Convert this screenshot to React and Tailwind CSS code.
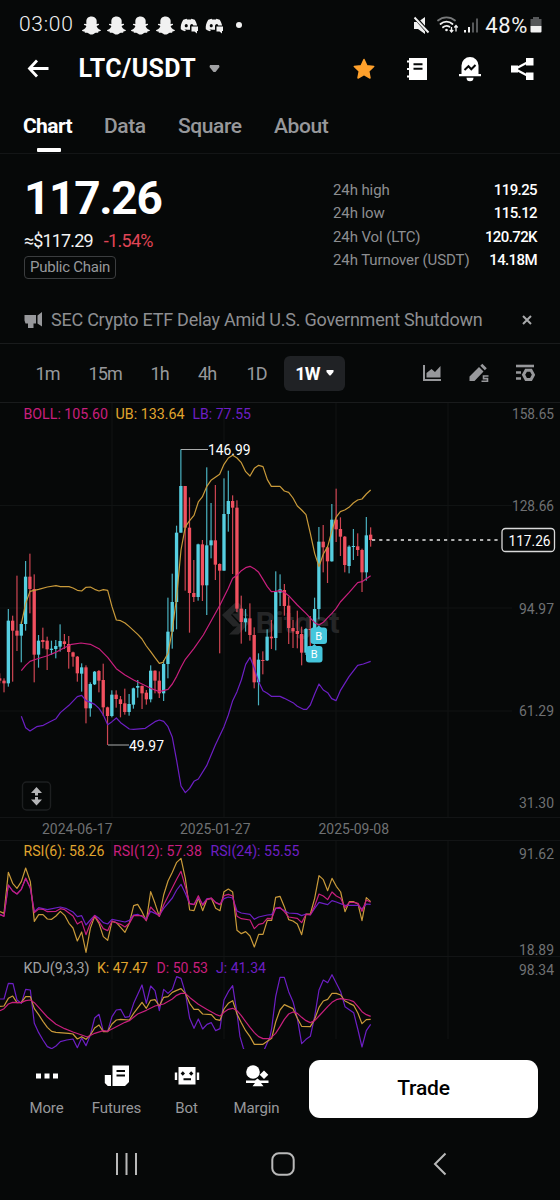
import React from 'react';
import { FaSnapchatGhost, FaDiscord } from 'react-icons/fa';

const AQUA = '#56cfe1';
const RED = '#f0505f';
const GOLD = '#c99a3a';
const PINK = '#c81f7d';
const VIOLET = '#6d1fc4';

const STEP = 12.94;

// [up, wick top, body top, body bottom, wick bottom], chart units are thirds of a pixel
const candles = [
  [0, 730, 745, 752, 760], [0, 745, 752, 760, 787], [1, 537, 572, 760, 770], [0, 557, 572, 602, 755],
  [0, 437, 602, 617, 663], [1, 575, 582, 617, 697], [1, 393, 440, 582, 602], [0, 371, 440, 477, 550],
  [0, 433, 477, 674, 757], [1, 615, 632, 674, 713], [0, 593, 630, 636, 655], [0, 620, 632, 658, 720],
  [1, 632, 656, 660, 675], [1, 630, 648, 657, 685], [1, 583, 633, 650, 665], [0, 612, 634, 642, 657],
  [0, 618, 642, 666, 716], [0, 665, 667, 680, 710], [0, 678, 680, 730, 755], [1, 700, 712, 731, 785],
  [0, 706, 712, 835, 880], [1, 757, 762, 835, 860], [1, 723, 725, 763, 765], [0, 720, 723, 752, 787],
  [0, 701, 750, 832, 858], [0, 830, 832, 858, 945], [1, 781, 794, 858, 862], [0, 781, 794, 807, 833],
  [0, 798, 808, 822, 862], [0, 776, 820, 846, 854], [1, 792, 822, 846, 857], [1, 773, 775, 824, 836],
  [1, 750, 768, 773, 803], [0, 766, 768, 790, 837], [0, 780, 788, 808, 824], [1, 706, 722, 808, 817],
  [0, 721, 722, 752, 790], [0, 724, 752, 790, 804], [1, 690, 702, 790, 813], [1, 503, 605, 702, 745],
  [1, 431, 516, 605, 656], [1, 287, 308, 516, 598], [1, 58, 168, 308, 308], [0, 168, 168, 293, 482],
  [0, 202, 293, 489, 608], [0, 390, 489, 501, 516], [1, 341, 343, 501, 512], [0, 330, 343, 466, 513],
  [1, 112, 346, 466, 555], [1, 219, 331, 346, 385], [0, 165, 331, 404, 450], [0, 400, 402, 422, 670],
  [1, 145, 252, 422, 422], [1, 122, 213, 252, 305], [0, 196, 213, 233, 432], [0, 211, 233, 536, 546],
  [0, 497, 536, 576, 641], [1, 537, 565, 577, 605], [0, 520, 565, 615, 632], [0, 592, 615, 757, 775],
  [1, 670, 689, 757, 826], [0, 664, 690, 692, 733], [1, 598, 620, 691, 693], [0, 570, 620, 625, 657],
  [1, 424, 486, 624, 661], [1, 433, 478, 488, 528], [0, 462, 480, 528, 557], [0, 500, 527, 594, 642],
  [0, 570, 594, 604, 654], [0, 542, 603, 612, 655], [0, 590, 612, 668, 706], [1, 594, 597, 668, 675],
  [0, 558, 597, 600, 648], [1, 503, 537, 600, 640], [1, 291, 335, 537, 568], [0, 285, 335, 352, 427],
  [0, 350, 352, 394, 459], [1, 222, 269, 394, 395], [0, 176, 269, 298, 336], [0, 262, 297, 320, 378],
  [0, 318, 320, 405, 427], [1, 346, 350, 408, 430], [1, 297, 348, 351, 390], [0, 310, 349, 360, 378],
  [0, 356, 360, 427, 486], [1, 261, 316, 427, 452], [0, 292, 314, 330, 350],
];

// each series is a list of [x offset, points]
const boll = {
  ub: [
    [0, '64,582 77,520 90,484 116,478 142,471 168,467 181,470 207,470 219,474 232,481 245,483 258,472 271,471 284,478 297,483 310,479 323,481 336,530 349,570 362,572 375,579 388,590 401,602 414,614 426,627 439,648 452,665 465,683 478,700 489,697 504,670 517,600 530,500 543,360 556,290 569,272'],
    [450, '132,256 145,216 157,201 170,170 183,151 196,142 209,133 222,103 235,84 248,76 261,84 274,98 287,125 300,138 313,115 326,106 339,110 352,149'],
    [750, '64,169 90,169 103,183 116,187 129,204 142,228 155,240 168,254 181,310 194,370 207,410 220,372 233,350 245,305 258,262 271,245 284,240 297,232 310,219 323,210 336,207 349,192 362,180'],
  ],
  mid: [
    [0, '64,722 77,706 90,694 110,687 140,678 165,668 190,655 215,643 243,639 271,643 297,656 323,682 349,716 375,735 401,750 426,762 452,775 478,785 504,778 517,762 530,739 543,712'],
    [450, '106,688 132,655 160,615 185,570 210,525 235,475 248,445 261,436 274,422 287,413 300,409 313,416 326,427 339,448 352,470'],
    [750, '64,485 77,484 90,482 103,487 116,497 142,525 168,550 194,578 207,585 220,577 233,563 245,551 258,536 271,516 297,488 323,458 336,455 349,446 362,437'],
  ],
  lb: [
    [0, '64,859 77,893 90,903 110,890 130,886 150,875 168,866 181,848 207,826 232,800 245,796 258,812 271,817 284,823 297,835 310,855 323,884 336,875 349,864 362,878 388,897 401,898 436,895 465,875 478,870 491,874 504,890 517,922 530,992 543,1068 556,1088'],
    [450, '119,1075 132,1054 145,1047 170,1007 196,945 222,890 235,855 248,812 261,785 274,750 287,703 300,682 313,715 326,755 339,782 352,790'],
    [750, '64,799 90,799 103,805 129,818 142,829 160,838 170,838 181,825 194,792 207,762 220,780 233,788 245,806 258,812 271,782 297,740 323,706 340,702 362,694'],
  ],
};

const rsi = {
  r6: [
    [0, '0,305 12,310 25,187 38,220 51,235 64,215 77,174 91,215 103,334 116,314 129,314 142,327 155,328 168,318 181,304 194,316 207,340 219,354 232,393 245,366 258,427 271,355 284,319 297,340 310,380 323,391 336,334 349,338 362,352 375,367 388,340 401,287 413,283 426,305 439,332 452,245 465,280 478,319 491,255 504,213 517,187 530,157 543,145 556,205 569,300'],
    [570, '12,302 25,264 38,302 51,268 64,265 77,295 90,302 102,245 115,237 128,246 141,361 154,371 167,365 180,378 193,411 206,373 219,373 232,331 245,331 257,262 270,259 283,290 296,329 309,333 322,342 335,374 348,312 361,312 374,265 387,197 400,209 413,242 426,205 439,229 452,246 465,305 478,275 491,275 504,282 516,332 529,263 542,275'],
  ],
  r12: [
    [0, '0,314 12,319 25,225 38,243 51,252 64,238 77,204 91,233 103,308 116,297 129,298 142,305 168,304 181,296 194,299 219,318 232,342 245,334 258,374 271,340 284,317 297,335 310,356 323,362 336,333 362,343 375,351 388,340 401,317 426,317 439,332 452,291 478,319 491,285 504,259 530,208 543,184 556,230 569,281'],
    [570, '12,284 25,257 38,286 51,268 64,264 77,278 90,284 102,257 115,253 128,258 141,319 154,326 180,330 193,356 206,343 219,340 232,325 245,326 257,294 270,292 283,305 296,321 322,325 335,338 348,313 361,314 374,288 387,252 400,258 413,269 426,246 439,258 452,265 465,293 478,277 491,277 504,280 516,304 529,270 542,277'],
  ],
  r24: [
    [0, '0,314 12,318 25,225 38,243 51,252 64,238 77,206 91,235 103,305 116,293 142,299 181,291 200,296 219,306 232,320 245,317 258,345 271,330 284,316 297,325 310,338 323,342 336,328 375,336 388,331 401,315 413,313 439,326 452,304 478,316 491,295 517,264 530,240 543,223 556,250 569,281'],
    [570, '12,283 25,263 38,283 51,266 64,265 77,277 90,283 102,266 115,261 128,264 141,303 154,309 180,313 193,328 206,321 232,315 245,314 257,295 270,295 296,309 322,311 335,317 348,312 361,315 374,295 387,277 413,284 426,272 439,276 465,286 504,286 516,297 529,282 542,283'],
  ],
};

const kdj = {
  k: [
    [0, '0,589 12,588 25,565 38,558 51,578 64,577 77,560 91,560 103,596 116,614 129,634 142,652 155,664 168,667 206,670 219,672 232,687 245,680 258,688 271,675 284,654 297,645 310,665 323,665 336,642 349,630 362,628 388,630 401,610 426,577 439,595 452,571 465,569 478,588 491,562 504,560 517,547 530,541 543,536 556,550 569,580'],
    [570, '12,598 25,598 38,612 64,614 77,628 90,631 102,597 115,580 128,572 141,612 154,638 167,662 180,680 193,703 219,703 245,685 257,636 270,600 283,584 296,590 309,596 322,625 335,649 361,650 374,628 387,592 400,573 413,568 426,550 439,550 452,555 465,573 478,580 491,586 504,610 516,641 529,629 542,628'],
  ],
  d: [
    [0, '0,602 12,596 25,582 38,577 64,578 77,572 91,570 103,578 116,592 142,621 168,643 194,656 219,666 245,675 262,681 284,670 310,662 323,664 349,650 375,637 388,632 413,612 439,601 465,588 491,582 517,567 530,556 543,550 556,550'],
    [570, '0,563 25,583 50,598 77,613 90,618 102,607 115,598 128,595 141,602 154,617 167,635 180,652 193,668 206,680 219,686 240,686 257,670 270,650 283,628 296,612 309,606 322,610 335,622 348,632 361,638 374,632 387,618 413,590 426,577 439,569 452,566 478,570 491,575 504,590 516,605 529,614 542,619'],
  ],
  j: [
    [0, '0,567 12,567 25,520 39,521 51,570 64,580 77,538 91,540 103,640 116,668 129,690 142,710 155,716 168,708 181,695 200,690 219,687 232,713 245,684 258,707 271,675 284,624 297,613 310,664 323,664 336,620 349,600 362,598 375,622 388,620 401,580 426,525 439,580 452,528 465,542 478,602 491,538 504,550 517,538 530,500 543,505 556,548 569,625'],
    [570, '12,655 25,627 38,657 51,643 64,638 77,662 90,656 102,570 115,545 128,527 141,610 150,680 160,714 180,760 205,760 225,714 240,680 245,655 257,560 270,502 283,502 296,545 309,575 322,625 335,701 348,688 361,679 374,620 387,540 400,510 413,518 426,494 439,520 452,545 465,590 491,608 504,660 516,711 529,662 542,643'],
  ],
};

const toPoints = (parts) =>
  parts
    .map(([dx, pts]) => pts.split(' ').map((p) => {
      const [x, y] = p.split(',').map(Number);
      return `${x + dx},${y}`;
    }).join(' '))
    .join(' ');

const Line = ({ parts, color }) => (
  <polyline points={toPoints(parts)} fill="none" stroke={color} strokeWidth="3.6" strokeLinejoin="round" />
);

const Label = ({ x, y, w, size = 14.5, fill = '#6f7173', children }) => (
  <text x={x} y={y} fontSize={size} fill={fill} textLength={w} lengthAdjust="spacingAndGlyphs">
    {children}
  </text>
);

const Columns = ({ height }) => (
  <path d={`M112 0V${height}M224 0V${height}M336 0V${height}M448 0V${height}`} stroke="#101313" />
);

const BuyMark = ({ x, y }) => (
  <g>
    <path d={`M${x + 5} ${y + 1}l3.3 -3l3.3 3z`} fill="#45c6dc" />
    <rect x={x} y={y} width="16.5" height="16.5" rx="3" fill="#45c6dc" />
    <text x={x + 8.2} y={y + 12.2} fontSize="11" fill="#fff" textAnchor="middle">B</text>
  </g>
);

const PriceChart = () => (
  <svg className="block border-t border-[#191b1c]" width="560" height="415" viewBox="0 0 560 414">
    <Columns height={414} />
    <path d="M0 102.5H512M0 205H512M0 308H512" stroke="#101313" />

    <g fill="#252627">
      <path d="M235 200l-13 12 11 11.500h8.500L231 212l4-4 5 5h8.500L239 200z" />
      <path d="M229 231.500h9.500L249 220l-9-9.500h-8.500l9 9.500z" />
      <text x="255.500" y="230" fontSize="29" fontWeight="700" textLength="84" lengthAdjust="spacingAndGlyphs">Bitget</text>
    </g>

    <g transform="translate(0 27) scale(0.33333)">
      {candles.map(([up, high, top, bottom, low], i) => {
        const x = 25 + (i - 2) * STEP;
        const color = up ? AQUA : RED;
        return (
          <g key={i} fill={color}>
            <rect x={x - 1.8} y={high} width="3.6" height={low - high} opacity="0.85" />
            <rect x={x - 5} y={top} width="10" height={Math.max(bottom - top, 3)} />
          </g>
        );
      })}
      <Line parts={boll.ub} color={GOLD} />
      <Line parts={boll.mid} color={PINK} />
      <Line parts={boll.lb} color={VIOLET} />
    </g>

    <path d="M181 46.500H208M108 342H129" stroke="#a9abab" />
    <Label x={208} y={52} w={42.5} size={15.5} fill="#fff">146.99</Label>
    <Label x={129} y={347.5} w={35} size={15.5} fill="#fff">49.97</Label>

    <BuyMark x={310.5} y={224.5} />
    <BuyMark x={306} y={243} />

    <path d="M372 137H500" stroke="#e8e8e8" strokeWidth="1.6" strokeDasharray="3.2 4" />
    <rect x="502" y="125.500" width="52.500" height="23" rx="3.500" fill="#060808" stroke="#d9d9d9" strokeWidth="1.3" />
    <Label x={508.5} y={142.5} w={42} size={15.5} fill="#fff">117.26</Label>

    <Label x={23.5} y={16} w={84.5} fill={PINK}>BOLL: 105.60</Label>
    <Label x={115.5} y={16} w={69} fill="#e0a52e">UB: 133.64</Label>
    <Label x={192.5} y={16} w={58.5} fill={VIOLET}>LB: 77.55</Label>

    <Label x={512} y={16} w={42}>158.65</Label>
    <Label x={512} y={107.5} w={42}>128.66</Label>
    <Label x={519} y={210.5} w={35}>94.97</Label>
    <Label x={519} y={313} w={35}>61.29</Label>
    <Label x={519} y={404.5} w={35}>31.30</Label>

    <rect x="22.500" y="379" width="28" height="28" rx="4" fill="#060808" stroke="#1d1f20" strokeWidth="1.4" />
    <path d="M36.500 384l5.500 6h-4v2.500h-3V390h-4zM36.500 402.500l5.500-6h-4V394h-3v2.500h-4z" fill="#b4b5b7" />
  </svg>
);

const DateAxis = () => (
  <svg className="block border-y border-[#121415]" width="560" height="24" viewBox="0 0 560 22">
    <Label x={42} y={15.5} w={70.5}>2024-06-17</Label>
    <Label x={180} y={15.5} w={70.5}>2025-01-27</Label>
    <Label x={318.5} y={15.5} w={70.5}>2025-09-08</Label>
  </svg>
);

const RsiChart = () => (
  <svg className="block overflow-visible" width="560" height="115" viewBox="0 0 560 115">
    <Columns height={115} />
    <g transform="translate(0 -31) scale(0.33333)">
      <Line parts={rsi.r6} color={GOLD} />
      <Line parts={rsi.r24} color={VIOLET} />
      <Line parts={rsi.r12} color={PINK} />
    </g>
    <Label x={23.5} y={15} w={81} fill="#e0a52e">RSI(6): 58.26</Label>
    <Label x={113} y={15} w={89} fill={PINK}>RSI(12): 57.38</Label>
    <Label x={210.5} y={15} w={89} fill={VIOLET}>RSI(24): 55.55</Label>
    <Label x={519} y={17.5} w={35}>91.62</Label>
    <Label x={519} y={114} w={35}>18.89</Label>
  </svg>
);

const KdjChart = () => (
  <svg className="block border-t border-[#121415]" width="560" height="93" viewBox="0 0 560 92">
    <Columns height={82} />
    <g transform="translate(0 -147) scale(0.33333)">
      <Line parts={kdj.j} color={VIOLET} />
      <Line parts={kdj.k} color={GOLD} />
      <Line parts={kdj.d} color={PINK} />
    </g>
    <Label x={23.5} y={16} w={66} fill="#a0a1a3">KDJ(9,3,3)</Label>
    <Label x={97} y={16} w={51} fill="#e0a52e">K: 47.47</Label>
    <Label x={156.5} y={16} w={51.5} fill={PINK}>D: 50.53</Label>
    <Label x={216} y={16} w={50} fill={VIOLET}>J: 41.34</Label>
    <Label x={519} y={18} w={35}>98.34</Label>
  </svg>
);

const StatusBar = () => (
  <div className="flex h-[50px] items-center pl-[19px] pr-[18px] text-[#f1f1f1]">
    <span className="w-[63px] text-[21px] font-light tracking-[0.7px]">03:00</span>
    <div className="flex items-center gap-[5.500px]">
      {[0, 1, 2, 3].map((i) => <FaSnapchatGhost key={i} className="size-[19px]" />)}
      {[0, 1].map((i) => (
        <svg key={i} width="19" height="19" viewBox="0 0 19 19">
          <FaDiscord x="0" y="0" size="18" />
          <path d="M10 9.500h9v8.500h-9z" fill="#060808" />
          <path d="M11.500 10.500h6.500v4.500h-1v2.500l-2.500-2h-3z" fill="currentColor" />
        </svg>
      ))}
    </div>
    <span className="ml-[12px] size-[6px] rounded-full bg-[#f1f1f1]" />
    <div className="ml-auto flex items-center">
      <svg width="74" height="22" viewBox="0 0 74 22">
        <path d="M2 8h4l7-5v17l-7-5H2z" fill="currentColor" />
        <path d="M2 2l14 16" stroke="#060808" strokeWidth="3.600" />
        <path d="M2.500 3.500l14 15" stroke="currentColor" strokeWidth="1.900" />
        <g fill="none" stroke="currentColor" strokeWidth="1.800" strokeLinecap="round">
          <path d="M26 6.500a13 13 0 0 1 17 0" stroke="#77797a" />
          <path d="M28.500 10a9 9 0 0 1 12 0" />
          <path d="M31 13.300a5.500 5.500 0 0 1 6.500-.500" />
        </g>
        <circle cx="34.500" cy="16" r="1.300" fill="currentColor" />
        <path d="M39.500 13v5M37.800 16l1.700 2 1.700-2M44 17.500v-6M42.300 13.500l1.700-2 1.700 2" fill="none" stroke="currentColor" strokeWidth="1.300" />
        <path d="M53 16v2.500" stroke="currentColor" strokeWidth="2" />
        <path d="M57 13v5.500" stroke="currentColor" strokeWidth="2" />
        <path d="M61 8.500v10M65 4.500v14" stroke="#56585a" strokeWidth="2" />
      </svg>
      <span className="-ml-[1px] text-[22px] tracking-[0.6px]">48%</span>
      <svg className="ml-[2px]" width="12" height="18" viewBox="0 0 12 18">
        <path d="M3 1h6v2H11.500v7H.500V3H3z" fill="#56585a" />
        <path d="M.500 10h11v5.500a1 1 0 0 1-1 1h-9a1 1 0 0 1-1-1z" fill="currentColor" />
      </svg>
    </div>
  </div>
);

const Header = () => (
  <header className="flex h-[38px] items-center pl-[26px] pr-[26px] text-white">
    <svg width="24" height="20" viewBox="0 0 24 20" fill="none" stroke="currentColor" strokeWidth="2.800">
      <path d="M11 1.500L3.500 9.500l7.500 8M3.500 9.500h19" />
    </svg>
    <h1 className="ml-[28.500px] text-[25px] font-bold tracking-[0.4px]">LTC/USDT</h1>
    <svg className="ml-[13px]" width="11" height="8" viewBox="0 0 11 8">
      <path d="M1 0h9l.500 2L6.500 7h-2L.500 2z" fill="#a0a1a3" />
    </svg>
    <div className="ml-auto flex items-center gap-[27px]">
      <svg width="26" height="26" viewBox="0 0 26 26">
        <path d="M13 3.500l2.900 6.200 6.800.8-5 4.700 1.300 6.800-6-3.400-6 3.400 1.300-6.800-5-4.700 6.800-.8z" fill="#ffa12c" stroke="#ffa12c" strokeWidth="1.500" strokeLinejoin="round" />
      </svg>
      <svg width="26" height="26" viewBox="0 0 26 26">
        <path d="M5 2h18v22H5v-2.500H3v-2h2v-5.500H3v-2h2V6.500H3v-2h2z" fill="#fff" />
        <path d="M9.500 8.300h9M9.500 12.700h9" stroke="#060808" strokeWidth="1.900" />
      </svg>
      <svg width="26" height="26" viewBox="0 0 26 26">
        <path d="M4.500 18V9.500a8.500 8.500 0 0 1 17 0V18H24v2.200H2V18zM9.500 21.800h7a3.500 3.500 0 0 1-7 0z" fill="#fff" />
        <path d="M7.500 14l4-3.800 2.800 3L18.500 9" fill="none" stroke="#060808" strokeWidth="2" />
      </svg>
      <svg width="24" height="26" viewBox="0 0 24 26">
        <path d="M1 9.500h7v7H1zM16 2h7.500v7.500H16zM16 16.500h7.500V24H16z" fill="#fff" />
        <path d="M5 13L20 5M5 13l15 8" stroke="#fff" strokeWidth="2.200" />
      </svg>
    </div>
  </header>
);

const Tabs = () => (
  <nav className="flex h-[66px] gap-[32px] border-b border-[#131516] pl-[23px] pt-[22px] text-[21px] leading-[32px] text-[#97989b]">
    <div className="flex w-[49px] flex-col items-center text-white">
      <span className="font-bold tracking-[-0.6px]">Chart</span>
      <span className="mt-[6px] ml-[3px] h-[4px] w-[24px] rounded-[1px] bg-white" />
    </div>
    <span className="w-[42px] font-medium tracking-[-0.4px]">Data</span>
    <span className="w-[64px] font-medium tracking-[-0.4px]">Square</span>
    <span className="font-medium tracking-[-0.4px]">About</span>
  </nav>
);

const stats = [
  ['24h high', '119.25'],
  ['24h low', '115.12'],
  ['24h Vol (LTC)', '120.72K'],
  ['24h Turnover (USDT)', '14.18M'],
];

const Summary = () => (
  <section className="flex h-[143px] justify-between pl-[24px] pr-[23px]">
    <div>
      <div className="mt-[19px] text-[46px] font-bold leading-[50px] tracking-[-1.3px] text-white">117.26</div>
      <div className="mt-[6px] flex gap-[11px] text-[18px] leading-[24px] tracking-[-0.85px] text-[#f2f2f2]">
        <span>≈$117.29</span>
        <span className="tracking-[-0.7px] text-[#e04556]">-1.54%</span>
      </div>
      <div className="mt-[3px] inline-block h-[23px] rounded-[4px] border border-[#3b3d3f] px-[5px] text-[15px] leading-[21px] tracking-[-0.25px] text-[#97989b]">
        Public Chain
      </div>
    </div>
    <div className="mt-[25px] w-[204px] text-[15px] leading-[23.300px]">
      {stats.map(([name, value]) => (
        <div key={name} className="flex justify-between">
          <span className="tracking-[-0.1px] text-[#8d8e91]">{name}</span>
          <span className="font-medium tracking-[-0.6px] text-white">{value}</span>
        </div>
      ))}
    </div>
  </section>
);

const News = () => (
  <div className="flex h-[47px] items-center border-b border-[#191b1c] pl-[24px] pr-[28px] text-[#8d8e91]">
    <svg width="19" height="18" viewBox="0 0 19 18" fill="#97989b">
      <path d="M.500 4h11.500v8.500H9.500V17h-5.500v-4.500H1.500l-1-3zM13.500 4.500L18 1v14.500l-4.500-3z" />
    </svg>
    <span className="ml-[8px] whitespace-nowrap text-[18px] leading-[24px] tracking-[-0.24px]">
      SEC Crypto ETF Delay Amid U.S. Government Shutdown
    </span>
    <svg className="ml-auto" width="10" height="10" viewBox="0 0 10 10" stroke="#a8a9ab" strokeWidth="2">
      <path d="M1 1l8 8M9 1l-8 8" />
    </svg>
  </div>
);

const Intervals = () => (
  <div className="flex h-[58px] items-center pl-[35.500px] pr-[25px] text-[18px] tracking-[-0.9px] text-[#97989b]">
    <span className="w-[53px]">1m</span>
    <span className="w-[62px]">15m</span>
    <span className="w-[47.500px]">1h</span>
    <span className="w-[48.500px]">4h</span>
    <span className="w-[37.500px]">1D</span>
    <button className="flex h-[35px] w-[61px] items-center justify-center gap-[6px] rounded-[6px] bg-[#202225] font-bold tracking-[-0.9px] text-white">
      1W
      <svg width="8" height="6" viewBox="0 0 8 6" fill="currentColor"><path d="M.500 0h7v2L4.500 5.500h-1L.500 2z" /></svg>
    </button>
    <div className="ml-auto flex items-center gap-[26.500px]">
      <svg width="20" height="20" viewBox="0 0 20 20" fill="#97989b">
        <path d="M1 2h2v14h16v2H1zM4.500 14.500V10l5-4 3.500 3 5.500-6v11.500z" />
      </svg>
      <svg width="20" height="20" viewBox="0 0 20 20" fill="#97989b">
        <path d="M.500 13.500L10 4l4.500 4.500L5.500 18h-5zM11.300 2.800L13.300.8l4.500 4.500-2 2z" />
        <path d="M19.500 13h-5v2.600h4v2.600h-6" fill="none" stroke="#97989b" strokeWidth="1.600" />
      </svg>
      <svg width="20" height="20" viewBox="0 0 20 20" fill="none" stroke="#97989b">
        <path d="M1 3h18" strokeWidth="2.600" />
        <path d="M1 9.500h5M1 15.500h5" strokeWidth="2.500" />
        <path d="M11 7.300h5l2.500 4.500-2.500 4.600h-5l-2.500-4.600z" strokeWidth="3" />
      </svg>
    </div>
  </div>
);

const BottomItem = ({ label, children }) => (
  <div className="flex w-[70px] flex-col items-center text-[15px] leading-[20px] text-[#97989b]">
    <svg width="26" height="26" viewBox="0 0 26 26" fill="#fff">{children}</svg>
    <span className="mt-[7px] tracking-[-0.1px]">{label}</span>
  </div>
);

const BottomBar = () => (
  <div className="flex h-[77px] pl-[11.500px] pr-[22px] pt-[11px]">
    <div className="flex pt-[5px]">
      <BottomItem label="More">
        <path d="M2 8.500h5v5H2zM10.500 8.500h5v5h-5zM19 8.500h5v5h-5z" />
      </BottomItem>
      <BottomItem label="Futures">
        <path d="M8.500.500H25V17l-4 4H8.500zM.800 10H7v11H3.800l-3-3z" />
        <path d="M12.500 6h8.500M12.500 10.500h8.500" stroke="#060808" strokeWidth="1.800" />
      </BottomItem>
      <BottomItem label="Bot">
        <path d="M4.500 2h17v17.500h-17zM.800 7.500h2.400v7.500H.800zM22.800 7.500h2.400v7.500h-2.400z" />
        <path d="M8.800 6.300l2.200 2.200-2.200 2.200-2.200-2.200zM17.200 6.300l2.200 2.200-2.200 2.200-2.200-2.200zM9.500 13.300h7.500v1.900H9.500z" fill="#060808" />
      </BottomItem>
      <BottomItem label="Margin">
        <circle cx="9" cy="7" r="6.800" />
        <path d="M20 5.500l4.300 4.300-4.300 4.300-4.300-4.300zM2 15.500h9l2.500-2 2.500 2h8.500v2.400h-7.500l2.500 3.300H8.500l2.500-3.300H2z" />
      </BottomItem>
    </div>
    <button className="ml-auto h-[58px] w-[229px] rounded-[11px] bg-white text-[21px] font-medium tracking-[-0.2px] text-black">
      Trade
    </button>
  </div>
);

const SystemNav = () => (
  <div className="flex h-[75px] items-center pl-[114px] pt-[1px]">
    <svg width="24" height="24" viewBox="0 0 24 24" stroke="#b9b9b9" strokeWidth="2">
      <path d="M3 1v22M12.500 1v22M22 1v22" />
    </svg>
    <svg className="ml-[133px]" width="24" height="24" viewBox="0 0 24 24" fill="none" stroke="#b9b9b9" strokeWidth="2">
      <rect x="1.300" y="1.300" width="21.400" height="21.400" rx="6.500" />
    </svg>
    <svg className="ml-[138px]" width="14" height="24" viewBox="0 0 14 24" fill="none" stroke="#b9b9b9" strokeWidth="2">
      <path d="M12.500 1.500L2 12l10.500 10.500" />
    </svg>
  </div>
);

const App = () => (
  <div className="h-[1200px] w-[560px] overflow-hidden bg-[#060808] font-[Roboto,sans-serif]">
    <StatusBar />
    <Header />
    <Tabs />
    <Summary />
    <News />
    <Intervals />
    <PriceChart />
    <DateAxis />
    <RsiChart />
    <KdjChart />
    <BottomBar />
    <SystemNav />
  </div>
);

export default App;
